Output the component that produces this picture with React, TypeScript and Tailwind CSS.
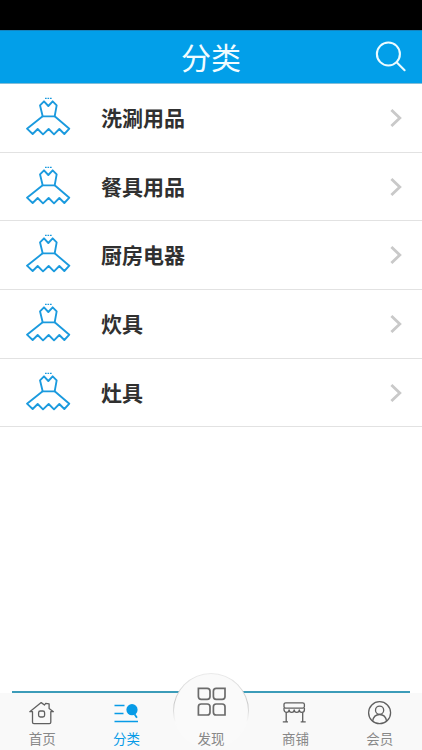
import { ReactNode } from "react";

const CATEGORIES = ["洗涮用品", "餐具用品", "厨房电器", "炊具", "灶具"];

function DressIcon() {
  return (
    <svg
      viewBox="27 33 144 138"
      className="h-[46px] w-12 flex-shrink-0"
      fill="none"
      stroke="#1a9ade"
      strokeWidth="5.6"
      strokeLinejoin="round"
    >
      <path d="M90 43h20" strokeWidth="4" strokeDasharray="5 2.5" />
      <path d="M83 97 75 64l12-12 13 14 13-14 12 12-6 33z" />
      <path d="M83 97 36 134l17 16 15-15 16 16 17-16 16 16 16-16 15 15 15-16-44-37" />
    </svg>
  );
}

function SearchIcon() {
  return (
    <svg
      viewBox="0 0 32 32"
      className="h-8 w-8"
      fill="none"
      stroke="#ecfbff"
      strokeWidth="2.1"
      strokeLinecap="round"
    >
      <circle cx="13.4" cy="13" r="11.5" />
      <path d="m21.6 21.2 8 8" />
    </svg>
  );
}

function ChevronIcon() {
  return (
    <svg
      viewBox="0 0 12 18"
      className="h-[18px] w-3"
      fill="none"
      stroke="#c9c9c9"
      strokeWidth="2.8"
    >
      <path d="m1.4 1 8.4 8-8.4 8" />
    </svg>
  );
}

function HomeIcon() {
  return (
    <svg
      viewBox="0 0 26 24"
      className="h-6 w-[26px]"
      fill="none"
      stroke="#606060"
      strokeWidth="1.3"
      strokeLinejoin="round"
      strokeLinecap="round"
    >
      <path d="M3.5 10.7H.8L12.2 1.600l3.3 2.4 1.2-1.7 3.4.5v4.6l4.3 3.3h-2.600v10.6q0 1.4-1.4 1.4H4.9q-1.4 0-1.4-1.4z" />
      <rect x="9.6" y="10" width="6" height="6" rx="1.8" />
    </svg>
  );
}

function CategoryIcon() {
  return (
    <svg
      viewBox="0 0 26 24"
      className="h-6 w-[26px]"
      fill="none"
      stroke="#079be7"
      strokeWidth="1.4"
    >
      <path d="M.5 4.5h10M.5 12.5h9M.5 20.5h23.5" />
      <circle cx="18" cy="8.7" r="5.6" fill="#079be7" stroke="none" />
      <path d="m20.6 13.2 2.3 3.6" strokeWidth="1.8" />
    </svg>
  );
}

function ShopIcon() {
  return (
    <svg
      viewBox="0 0 26 24"
      className="h-6 w-[26px]"
      fill="none"
      stroke="#606060"
      strokeWidth="1.3"
      strokeLinejoin="round"
    >
      <rect x="2" y="1.8" width="20.4" height="5.4" rx="1.8" />
      <path d="M2 7v1.800a2.55 2.55 0 0 0 5.1 0 2.55 2.55 0 0 0 5.1 0 2.55 2.55 0 0 0 5.1 0 2.55 2.55 0 0 0 5.1 0V7" />
      <path d="M4.2 11.500v9M20.7 11.500v9M.8 20.800h5.200M18.700 20.800h5" />
    </svg>
  );
}

function MemberIcon() {
  return (
    <svg
      viewBox="0 0 26 24"
      className="h-6 w-[26px]"
      fill="none"
      stroke="#606060"
      strokeWidth="1.3"
    >
      <circle cx="12.6" cy="11.7" r="11" />
      <circle cx="12.6" cy="9.2" r="4.1" />
      <path d="M5.6 20.1c.7-4.2 3.3-6.6 7-6.6s6.3 2.4 7 6.6" />
    </svg>
  );
}

function DiscoverIcon() {
  return (
    <svg
      viewBox="0 0 30 30"
      className="mb-2 ml-0.5 h-[30px] w-[30px] flex-shrink-0"
      fill="none"
      stroke="#6b6b6b"
      strokeWidth="1.7"
    >
      <path d="M1.4 1.4h8.800q2.800 0 2.800 2.800v5.400q0 2.800-2.800 2.800H4.200q-2.800 0-2.800-2.800z" />
      <path d="M28 1.4h-8.800q-2.800 0-2.800 2.800v5.400q0 2.800 2.800 2.800h6q2.800 0 2.800-2.800z" />
      <path d="M1.4 28h8.800q2.800 0 2.800-2.800v-5.400q0-2.800-2.800-2.800H4.200q-2.800 0-2.800 2.800z" />
      <path d="M28 28h-8.800q-2.800 0-2.800-2.800v-5.400q0-2.800 2.800-2.800h6q2.800 0 2.800 2.800z" />
    </svg>
  );
}

function NavItem({
  icon,
  label,
  active = false,
}: {
  icon: ReactNode;
  label: string;
  active?: boolean;
}) {
  return (
    <button
      type="button"
      className="flex h-[59px] flex-col items-center justify-end pb-[3px]"
    >
      {icon}
      <span
        className={
          active
            ? "mt-1 text-[13.5px] leading-[18px] text-[#079be7]"
            : "mt-1 text-[13.5px] leading-[18px] text-[#888]"
        }
      >
        {label}
      </span>
    </button>
  );
}

export default function App() {
  return (
    <div className="flex h-[750px] w-[422px] flex-col overflow-hidden bg-white font-['Noto_Sans_CJK_SC',sans-serif]">
      <div className="h-[30px] flex-shrink-0 bg-black" />
      <header className="grid h-[54px] flex-shrink-0 grid-cols-3 items-center border-t border-b border-t-[#1583bd] border-b-[#83bdd7] bg-[#029fe9] pr-[15px]">
        <h1 className="col-start-2 pb-0.5 pl-[15px] text-center text-[30px] leading-[50px] text-[#f1fcff]">
          分类
        </h1>
        <button type="button" className="justify-self-end" aria-label="搜索">
          <SearchIcon />
        </button>
      </header>

      <main className="flex-1">
        <ul>
          {CATEGORIES.map((name) => (
            <li
              key={name}
              className="flex h-[68.7px] items-center border-b border-[#e2e2e2] pr-5 pl-6"
            >
              <DressIcon />
              <span className="ml-[29px] flex-1 pb-0.5 text-[21px] leading-[30px] font-bold text-[#303030]">
                {name}
              </span>
              <ChevronIcon />
            </li>
          ))}
        </ul>
      </main>

      <footer className="relative h-[59px] flex-shrink-0">
        <div className="mx-3 h-0.5 bg-[#3c9cb9]" />
        <div className="h-[57px] bg-[#f9f9f9]" />
        <div className="absolute top-[-18px] left-[173px] h-[76px] w-[76px] rounded-full bg-gradient-to-b from-[#ebebeb] via-[#c8c8c8] via-40% to-[#fafafa] to-65% p-px">
          <div className="h-full rounded-full bg-[#fafafa]" />
        </div>
        <nav className="absolute inset-0 grid grid-cols-5 items-end">
          <NavItem icon={<HomeIcon />} label="首页" />
          <NavItem icon={<CategoryIcon />} label="分类" active />
          <NavItem icon={<DiscoverIcon />} label="发现" />
          <NavItem icon={<ShopIcon />} label="商铺" />
          <NavItem icon={<MemberIcon />} label="会员" />
        </nav>
      </footer>
    </div>
  );
}
